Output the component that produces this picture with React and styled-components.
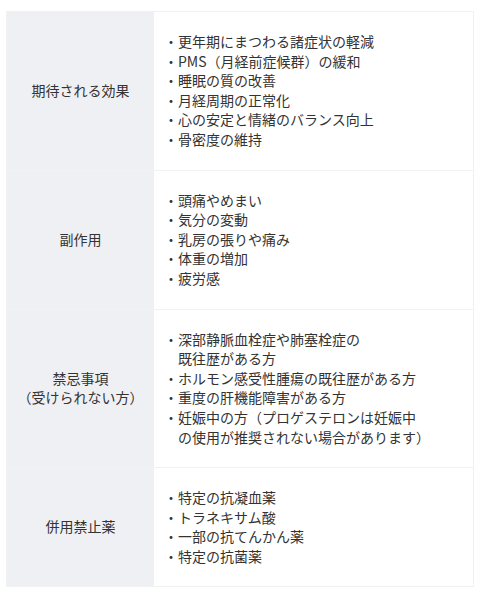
import React from "react";
import styled, { createGlobalStyle } from "styled-components";

const Global = createGlobalStyle`
  html, body { margin: 0; padding: 0; background: #ffffff; }
  body {
    font-family: "Noto Sans CJK JP", "Noto Sans", sans-serif;
    color: #333333;
    -webkit-font-smoothing: antialiased;
  }
`;

const Page = styled.div`
  padding: 11px 6px;
`;

const Table = styled.div`
  border: 1px solid #f1f1f3;
  display: flex;
  flex-direction: column;
`;

const Row = styled.div`
  display: grid;
  grid-template-columns: 147px 1fr;
  border-top: ${(p) => (p.$first ? "none" : "1px solid #f1f2f4")};
`;

const Label = styled.div`
  background: #eff0f3;
  display: flex;
  align-items: center;
  justify-content: center;
  text-align: center;
  font-size: 14px;
  line-height: 1.4;
  padding: 20px 8px;
`;

const Content = styled.div`
  padding: 20px 10px;
  display: flex;
  align-items: center;
`;

const List = styled.ul`
  list-style: none;
  margin: 0;
  padding: 0;
  font-size: 14px;
  line-height: 1.4;
`;

const Item = styled.li`
  padding-left: 1em;
  text-indent: -1em;
`;

const rows = [
  {
    label: ["期待される効果"],
    items: [
      ["更年期にまつわる諸症状の軽減"],
      ["PMS（月経前症候群）の緩和"],
      ["睡眠の質の改善"],
      ["月経周期の正常化"],
      ["心の安定と情緒のバランス向上"],
      ["骨密度の維持"],
    ],
  },
  {
    label: ["副作用"],
    items: [
      ["頭痛やめまい"],
      ["気分の変動"],
      ["乳房の張りや痛み"],
      ["体重の増加"],
      ["疲労感"],
    ],
  },
  {
    label: ["禁忌事項", "（受けられない方）"],
    items: [
      ["深部静脈血栓症や肺塞栓症の", "既往歴がある方"],
      ["ホルモン感受性腫瘍の既往歴がある方"],
      ["重度の肝機能障害がある方"],
      ["妊娠中の方（プロゲステロンは妊娠中", "の使用が推奨されない場合があります）"],
    ],
  },
  {
    label: ["併用禁止薬"],
    items: [
      ["特定の抗凝血薬"],
      ["トラネキサム酸"],
      ["一部の抗てんかん薬"],
      ["特定の抗菌薬"],
    ],
  },
];

const Lines = ({ lines }) =>
  lines.map((l, i) => (
    <React.Fragment key={i}>
      {i > 0 && <br />}
      {l}
    </React.Fragment>
  ));

export default function App() {
  return (
    <>
      <Global />
      <Page>
        <Table>
          {rows.map((r, i) => (
            <Row key={i} $first={i === 0}>
              <Label>
                <div>
                  <Lines lines={r.label} />
                </div>
              </Label>
              <Content>
                <List>
                  {r.items.map((it, j) => (
                    <Item key={j}>
                      ・<Lines lines={it} />
                    </Item>
                  ))}
                </List>
              </Content>
            </Row>
          ))}
        </Table>
      </Page>
    </>
  );
}
